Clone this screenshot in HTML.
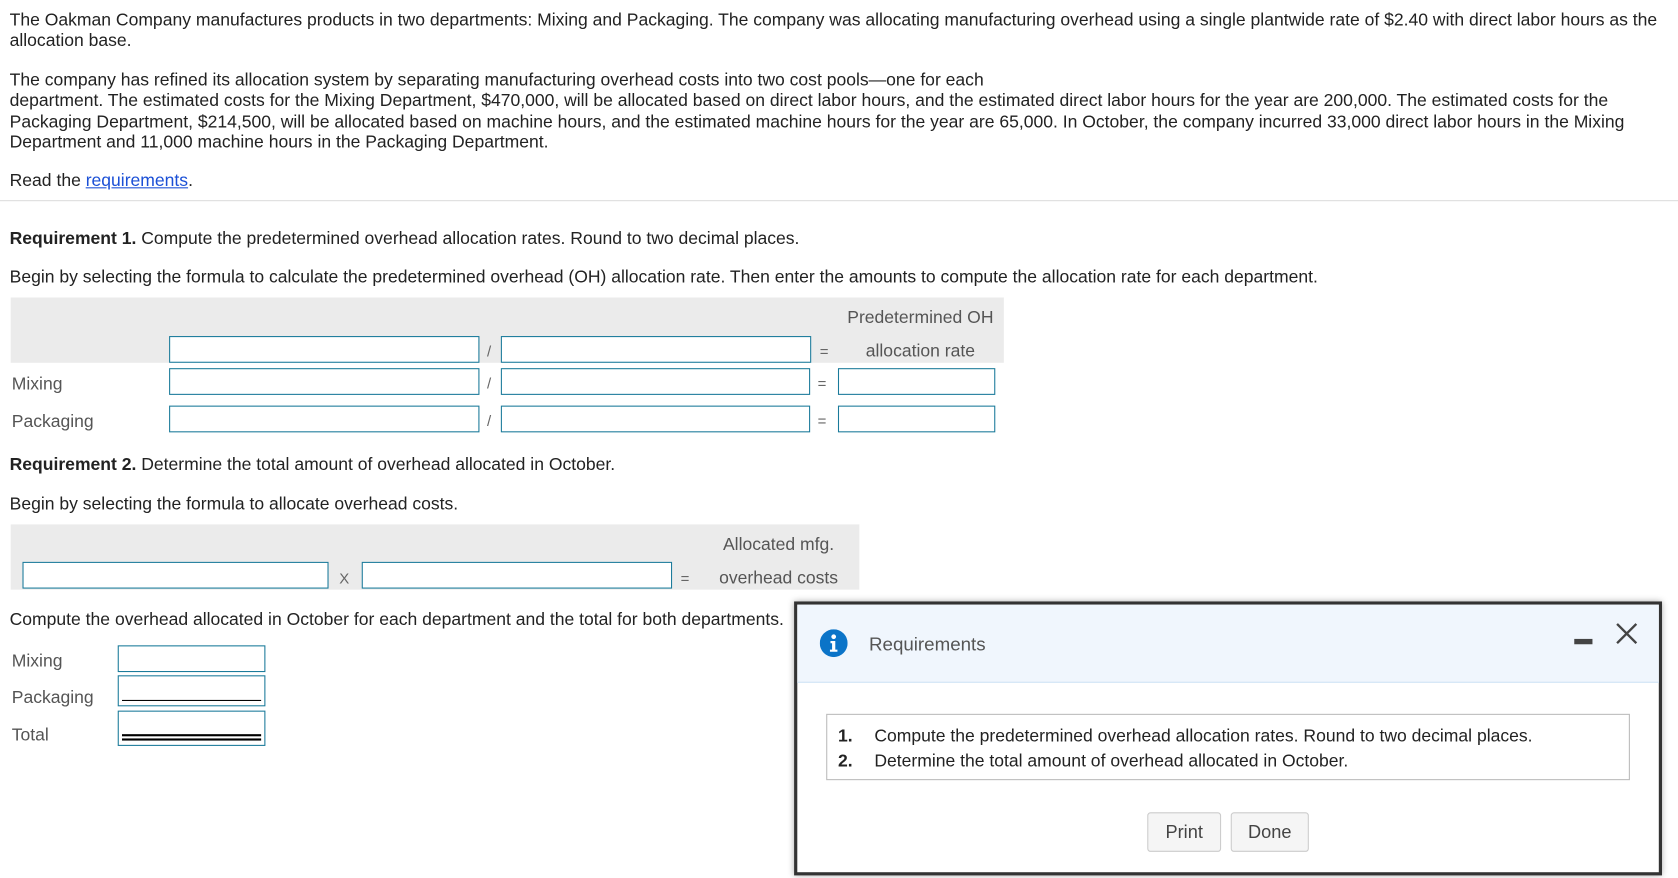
<!DOCTYPE html>
<html><head><meta charset="utf-8"><style>
html,body{margin:0;padding:0;background:#fff;overflow:hidden;width:1678px;height:877px}
#w{position:absolute;left:0;top:0;width:1568px;height:820px;transform:scale(1.0702);transform-origin:0 0;font-family:"Liberation Sans",Arial,sans-serif;font-size:16.4px;color:#222}
.a{position:absolute;white-space:nowrap;line-height:20px}
.t{margin-top:1.5px}
.g{position:absolute;background:#ebebeb}
.in{position:absolute;border:1px solid #1a7a9a;background:#fff;box-sizing:border-box}
.lab{color:#555}
.op{color:#666;font-size:14px}
b{font-weight:bold}
</style></head><body><div id="w">
<div class="a" style="left:9px;top:8.5px">The Oakman Company manufactures products in two departments: Mixing and Packaging. The company was allocating manufacturing overhead using a single plantwide rate of $2.40 with direct labor hours as the</div>
<div class="a" style="left:9px;top:27.5px">allocation base.</div>
<div class="a" style="left:9px;top:64.5px">The company has refined its allocation system by separating manufacturing overhead costs into two cost pools—one for each</div>
<div class="a" style="left:9px;top:83.5px">department. The estimated costs for the Mixing Department, $470,000, will be allocated based on direct labor hours, and the estimated direct labor hours for the year are 200,000. The estimated costs for the</div>
<div class="a" style="left:9px;top:103.5px">Packaging Department, $214,500, will be allocated based on machine hours, and the estimated machine hours for the year are 65,000. In October, the company incurred 33,000 direct labor hours in the Mixing</div>
<div class="a" style="left:9px;top:122.5px">Department and 11,000 machine hours in the Packaging Department.</div>
<div class="a" style="left:9px;top:158.5px">Read the <span style="color:#1a4fd6;text-decoration:underline">requirements</span>.</div>
<div style="position:absolute;left:0;top:187px;width:1568px;height:1px;background:#ddd"></div>
<div class="a" style="left:9px;top:212.5px"><b>Requirement 1.</b> Compute the predetermined overhead allocation rates. Round to two decimal places.</div>
<div class="a" style="left:9px;top:248.5px">Begin by selecting the formula to calculate the predetermined overhead (OH) allocation rate. Then enter the amounts to compute the allocation rate for each department.</div>
<div class="g" style="left:10px;top:278px;width:928px;height:61px"></div>
<div class="a lab" style="left:782px;top:287px;width:156px;text-align:center">Predetermined OH</div>
<div class="a lab" style="left:782px;top:318px;width:156px;text-align:center">allocation rate</div>
<div class="in" style="left:158px;top:314px;width:290px;height:25px"></div>
<div class="a op" style="left:455px;top:318px">/</div>
<div class="in" style="left:468px;top:314px;width:290px;height:25px"></div>
<div class="a op" style="left:766px;top:318px">=</div>
<div class="a lab" style="left:11px;top:348.5px">Mixing</div>
<div class="in" style="left:158px;top:344px;width:290px;height:25px"></div>
<div class="a op" style="left:455px;top:348px">/</div>
<div class="in" style="left:468px;top:344px;width:289px;height:25px"></div>
<div class="a op" style="left:764px;top:348px">=</div>
<div class="in" style="left:783px;top:344px;width:147px;height:25px"></div>
<div class="a lab" style="left:11px;top:383.5px">Packaging</div>
<div class="in" style="left:158px;top:379px;width:290px;height:25px"></div>
<div class="a op" style="left:455px;top:383px">/</div>
<div class="in" style="left:468px;top:379px;width:289px;height:25px"></div>
<div class="a op" style="left:764px;top:383px">=</div>
<div class="in" style="left:783px;top:379px;width:147px;height:25px"></div>
<div class="a" style="left:9px;top:423.5px"><b>Requirement 2.</b> Determine the total amount of overhead allocated in October.</div>
<div class="a" style="left:9px;top:460.5px">Begin by selecting the formula to allocate overhead costs.</div>
<div class="g" style="left:10px;top:490px;width:793px;height:61px"></div>
<div class="a lab" style="left:655px;top:499px;width:145px;text-align:center">Allocated mfg.</div>
<div class="a lab" style="left:655px;top:530px;width:145px;text-align:center">overhead costs</div>
<div class="in" style="left:21px;top:525px;width:286px;height:25px"></div>
<div class="a op" style="left:317px;top:530px">X</div>
<div class="in" style="left:338px;top:525px;width:290px;height:25px"></div>
<div class="a op" style="left:636px;top:530px">=</div>
<div class="a" style="left:9px;top:568.5px">Compute the overhead allocated in October for each department and the total for both departments.</div>
<div class="a lab" style="left:11px;top:607.5px">Mixing</div>
<div class="in" style="left:110px;top:603px;width:138px;height:25px"></div>
<div class="a lab" style="left:11px;top:641.5px">Packaging</div>
<div class="in" style="left:110px;top:631px;width:138px;height:29px"><div style="position:absolute;left:3px;right:3px;top:22px;height:1px;background:#000"></div></div>
<div class="a lab" style="left:11px;top:676.5px">Total</div>
<div class="in" style="left:110px;top:664px;width:138px;height:33px"><div style="position:absolute;left:3px;right:3px;top:21px;height:2px;background:#000"></div><div style="position:absolute;left:3px;right:3px;top:25px;height:2px;background:#000"></div></div>
<div style="position:absolute;left:742px;top:562px;width:805px;height:250px;border:3px solid #333;background:#fff;box-shadow:0 0 6px rgba(0,0,0,.35)">
 <div style="position:absolute;left:0;top:0;right:0;height:72px;background:#f0f6fd;border-bottom:1px solid #cfe3f5"></div>
 <svg style="position:absolute;left:21px;top:23px" width="26" height="26" viewBox="0 0 26 26"><circle cx="13" cy="13" r="13" fill="#0b74c8"/><circle cx="13" cy="7" r="2.2" fill="#fff"/><path d="M10 11h4.5v8h2v2h-7v-2h2v-6h-1.5z" fill="#fff"/></svg>
 <div class="a" style="left:67px;top:27px;font-size:17.5px;color:#555">Requirements</div>
 <div style="position:absolute;left:726px;top:32px;width:17px;height:5px;background:#444"></div>
 <svg style="position:absolute;left:764px;top:16px" width="22" height="22" viewBox="0 0 22 22"><path d="M2 2L20 20M20 2L2 20" stroke="#444" stroke-width="2.2"/></svg>
 <div style="position:absolute;left:27px;top:102px;width:751px;height:62px;border:1px solid #bbb;box-sizing:border-box"></div>
 <div class="a" style="left:38px;top:112.5px"><b>1.</b></div>
 <div class="a" style="left:72px;top:112.5px">Compute the predetermined overhead allocation rates. Round to two decimal places.</div>
 <div class="a" style="left:38px;top:135.5px"><b>2.</b></div>
 <div class="a" style="left:72px;top:135.5px">Determine the total amount of overhead allocated in October.</div>
 <div style="position:absolute;left:327px;top:194px;width:69px;height:37px;border:1px solid #ccc;border-radius:3px;background:#f5f5f5;box-sizing:border-box;text-align:center;line-height:35px;color:#444;font-size:17px">Print</div>
 <div style="position:absolute;left:405px;top:194px;width:73px;height:37px;border:1px solid #ccc;border-radius:3px;background:#f5f5f5;box-sizing:border-box;text-align:center;line-height:35px;color:#444;font-size:17px">Done</div>
</div>
</div></body></html>
